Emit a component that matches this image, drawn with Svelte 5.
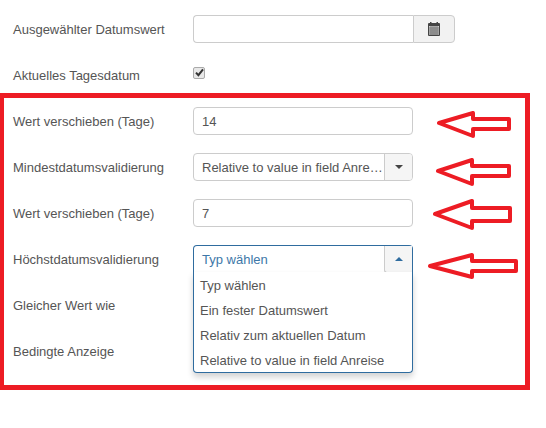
<script lang="ts">
  const options = [
    "Typ wählen",
    "Ein fester Datumswert",
    "Relativ zum aktuellen Datum",
    "Relative to value in field Anreise",
  ];

  // outlines of the hand drawn arrows: tip, head top, shaft, head bottom
  const arrows = [
    "439,123 473,113 473,119 509,119 509,129 473,129 473,136",
    "438,171 472,160 472,166 509,166 509,176 472,176 472,184",
    "435,214 472,201 472,208 510,208 510,221 472,221 472,228",
    "430,266 472,255 472,261 516,261 516,271 472,271 472,277",
  ];
</script>

<div class="page">
  <div class="form">
    <div class="row">
      <span class="label">Ausgewählter Datumswert</span>
      <div class="group">
        <input class="field joined" type="text" readonly />
        <span class="addon">
          <svg width="12" height="14" viewBox="0 0 12 14">
            <rect x="0" y="1" width="12" height="13" rx="1" fill="#444" />
            <rect x="2" y="0" width="1.5" height="2" fill="#444" />
            <rect x="8.5" y="0" width="1.5" height="2" fill="#444" />
            <rect x="1" y="4" width="10" height="9" fill="#ccc" />
            <path d="M1 6h10M1 8h10M1 10h10M1 12h10" stroke="#666" stroke-width="0.8" />
            <path d="M3 4v9M5 4v9M7 4v9M9 4v9" stroke="#666" stroke-width="0.7" />
          </svg>
        </span>
      </div>
    </div>

    <div class="row">
      <span class="label">Aktuelles Tagesdatum</span>
      <span class="check">
        <svg width="9" height="9" viewBox="0 0 9 9">
          <path d="M1 4.6 3.4 7.2 8 1.4" fill="none" stroke="#333" stroke-width="2" />
        </svg>
      </span>
    </div>

    <div class="row">
      <span class="label">Wert verschieben (Tage)</span>
      <input class="field" type="text" value="14" readonly />
    </div>

    <div class="row">
      <span class="label">Mindestdatumsvalidierung</span>
      <div class="select">
        <span class="select-text">Relative to value in field Anreise</span>
        <span class="caret-box"><span class="caret"></span></span>
      </div>
    </div>

    <div class="row">
      <span class="label">Wert verschieben (Tage)</span>
      <input class="field" type="text" value="7" readonly />
    </div>

    <div class="row">
      <span class="label">Höchstdatumsvalidierung</span>
      <div class="select open">
        <span class="select-text">Typ wählen</span>
        <span class="caret-box"><span class="caret up"></span></span>
        <ul class="menu">
          {#each options as option}
            <li>{option}</li>
          {/each}
        </ul>
      </div>
    </div>

    <div class="row">
      <span class="label">Gleicher Wert wie</span>
    </div>

    <div class="row">
      <span class="label">Bedingte Anzeige</span>
    </div>
  </div>

  <div class="frame"></div>

  <svg class="arrows" width="546" height="428" viewBox="0 0 546 428">
    {#each arrows as points}
      <polygon {points} fill="#fff" stroke="#ed1c24" stroke-width="4" stroke-linejoin="round" />
    {/each}
  </svg>
</div>

<style>
  :global(body) {
    background: #fff;
  }
  .page {
    position: relative;
    width: 546px;
    height: 428px;
    overflow: hidden;
    font-family: "Liberation Sans", Arial, sans-serif;
    font-size: 13px;
    color: #555;
  }
  .form {
    display: flex;
    flex-direction: column;
    gap: 16px;
    padding: 14px 0 0 13px;
  }
  .row {
    display: flex;
    align-items: center;
    height: 30px;
  }
  .label {
    width: 180px;
    flex: none;
  }
  .field {
    width: 220px;
    height: 28px;
    padding: 1px 8px;
    box-sizing: border-box;
    border: 1px solid #ccc;
    border-radius: 4px;
    background: #fff;
    color: #555;
    font: inherit;
    outline: none;
  }
  .group {
    display: flex;
  }
  .joined {
    border-radius: 4px 0 0 4px;
    border-right: none;
  }
  .addon {
    display: flex;
    align-items: center;
    justify-content: center;
    box-sizing: border-box;
    width: 42px;
    height: 28px;
    border: 1px solid #ccc;
    border-radius: 0 4px 4px 0;
    background: #f2f2f2;
  }
  .check {
    display: flex;
    align-items: center;
    justify-content: center;
    box-sizing: border-box;
    width: 12px;
    height: 12px;
    margin-top: -5px;
    border: 1px solid #aaa;
    border-radius: 2px;
    background: #e8e8e8;
  }
  .select {
    position: relative;
    display: flex;
    align-items: center;
    justify-content: space-between;
    box-sizing: border-box;
    width: 220px;
    height: 28px;
    border: 1px solid #ccc;
    border-radius: 4px;
    background: #fff;
  }
  .select-text {
    flex: 1;
    min-width: 0;
    padding-left: 8px;
    padding-right: 1px;
    white-space: nowrap;
    overflow: hidden;
    text-overflow: ellipsis;
  }
  .caret-box {
    display: flex;
    flex: none;
    align-items: center;
    justify-content: center;
    width: 28px;
    height: 100%;
    box-sizing: border-box;
    border-left: 1px solid #ccc;
    border-radius: 0 3px 3px 0;
    background: #f5f5f5;
  }
  .caret {
    width: 0;
    height: 0;
    border-left: 4px solid transparent;
    border-right: 4px solid transparent;
    border-top: 4px solid #444;
  }
  .caret.up {
    border-top: none;
    border-bottom: 4px solid #2f6c9f;
  }
  .open {
    border-color: #2f6c9f;
    border-bottom-color: transparent;
    border-radius: 4px 4px 0 0;
    color: #3d77a8;
  }
  .open .caret-box {
    border: 1px solid #ccc;
    border-top: none;
    border-right: none;
    border-radius: 0 0 0 3px;
    height: 27px;
    align-self: flex-start;
  }
  .menu {
    position: absolute;
    top: 26px;
    left: -1px;
    right: -1px;
    box-sizing: border-box;
    height: 101px;
    margin: 0;
    padding: 1px 0 0;
    list-style: none;
    background: #fff;
    border: 1px solid #2f6c9f;
    border-top: none;
    border-radius: 0 0 4px 4px;
    box-shadow: 0 4px 6px rgba(0, 0, 0, 0.18);
    color: #555;
  }
  .menu li {
    height: 25px;
    line-height: 25px;
    padding-left: 6px;
  }
  .frame {
    position: absolute;
    left: -1px;
    top: 93px;
    width: 521px;
    height: 287px;
    border: 5px solid #ed1c24;
    pointer-events: none;
  }
  .arrows {
    position: absolute;
    left: 0;
    top: 0;
    pointer-events: none;
  }
</style>
